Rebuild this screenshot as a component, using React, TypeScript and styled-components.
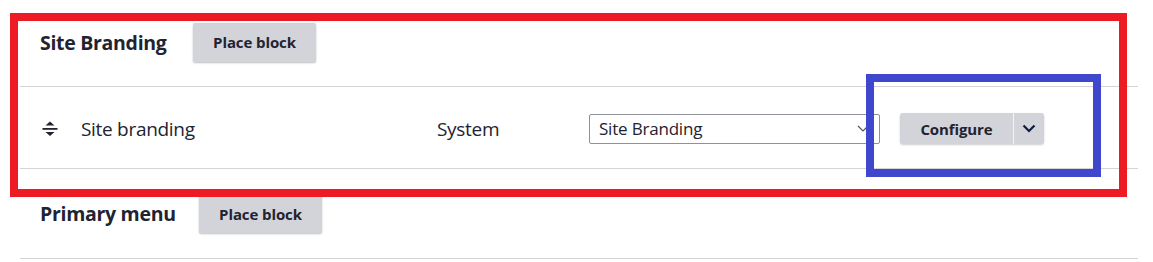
import * as React from 'react';
import styled, { createGlobalStyle } from 'styled-components';

const GlobalStyle = createGlobalStyle`
  html, body {
    margin: 0;
    padding: 0;
    background: #ffffff;
  }
  body {
    font-family: "Open Sans", "Noto Sans", "Liberation Sans", sans-serif;
    color: #222330;
  }
`;

const Screen = styled.div`
  position: relative;
  width: 1153px;
  height: 262px;
  overflow: hidden;
`;

const Regions = styled.div`
  margin: -2px 15px 0 20px;
`;

const RegionHeader = styled.div<{ $height: number }>`
  display: flex;
  align-items: center;
  height: ${(p) => p.$height}px;
  padding-left: 20px;
  border-bottom: 1px solid #d4d4d8;
  box-sizing: border-box;
`;

const RegionTitle = styled.h2<{ $width: number }>`
  margin: 0;
  width: ${(p) => p.$width}px;
  font-size: 19.5px;
  font-weight: 700;
  letter-spacing: -0.3px;
  color: #222330;
  white-space: nowrap;
`;

const PlaceButton = styled.button`
  width: 123px;
  height: 39px;
  border: 0;
  border-radius: 2px;
  background: #d3d4d9;
  box-shadow: 0 1px 2px rgba(0, 0, 0, 0.25);
  font-family: inherit;
  font-size: 15px;
  font-weight: 700;
  letter-spacing: -0.1px;
  color: #222330;
  padding: 0;
  cursor: pointer;
`;

const BlockRow = styled.div`
  display: grid;
  grid-template-columns: 61px 356px 152px 291px auto;
  align-items: center;
  height: 82px;
  padding-top: 2px;
  border-bottom: 1px solid #d4d4d8;
  box-sizing: border-box;
`;

const Handle = styled.span`
  display: flex;
  padding-left: 21px;
`;

const Cell = styled.span`
  font-size: 19px;
  color: #222330;
  letter-spacing: -0.3px;
`;

const SelectWrap = styled.div`
  position: relative;
  width: 291px;
  height: 30px;
  box-sizing: border-box;
  border: 1px solid #8e929c;
  border-radius: 2px;
  display: flex;
  align-items: center;
  padding-left: 9px;
  font-size: 17px;
  letter-spacing: -0.2px;
  color: #222330;
`;

const SelectArrow = styled.svg`
  position: absolute;
  right: 10px;
  top: 10px;
`;

const SplitButton = styled.div`
  display: flex;
  margin-left: 20px;
  width: 144px;
  height: 31px;
  border-radius: 3px;
  background: #d3d4d9;
  box-shadow: 0 1px 2px rgba(0, 0, 0, 0.2);
  overflow: hidden;
`;

const SplitMain = styled.button`
  width: 114px;
  border: 0;
  background: transparent;
  font-family: inherit;
  font-size: 15px;
  font-weight: 700;
  letter-spacing: -0.1px;
  color: #222330;
  padding: 0;
  border-right: 1px solid #f3f4f6;
`;

const SplitToggle = styled.button`
  flex: 1;
  border: 0;
  background: transparent;
  display: flex;
  align-items: center;
  justify-content: center;
  padding: 0;
`;

const Frame = styled.div<{ $color: string; $x: number; $y: number; $w: number; $h: number }>`
  position: absolute;
  left: ${(p) => p.$x}px;
  top: ${(p) => p.$y}px;
  width: ${(p) => p.$w}px;
  height: ${(p) => p.$h}px;
  border: 8px solid ${(p) => p.$color};
  box-sizing: border-box;
  pointer-events: none;
`;

function DragIcon() {
  return (
    <svg width="18" height="18" viewBox="0 0 18 18">
      <path d="M4.5 5.5 L9 1.5 L13.5 5.5 Z" fill="#222330" />
      <rect x="1.5" y="8" width="15" height="1.8" fill="#222330" />
      <path d="M4.5 12 L9 16 L13.5 12 Z" fill="#222330" />
    </svg>
  );
}

export default function App() {
  return (
    <>
      <GlobalStyle />
      <Screen>
        <Regions>
          <RegionHeader $height={89}>
            <RegionTitle $width={153}>Site Branding</RegionTitle>
            <PlaceButton>Place block</PlaceButton>
          </RegionHeader>
          <BlockRow>
            <Handle>
              <DragIcon />
            </Handle>
            <Cell>Site branding</Cell>
            <Cell>System</Cell>
            <SelectWrap>
              Site Branding
              <SelectArrow width="12" height="8" viewBox="0 0 12 8">
                <path d="M1 1 L6 6 L11 1" fill="none" stroke="#555" strokeWidth="1.2" />
              </SelectArrow>
            </SelectWrap>
            <SplitButton>
              <SplitMain>Configure</SplitMain>
              <SplitToggle>
                <svg width="14" height="9" viewBox="0 0 14 9">
                  <path d="M1.5 1.5 L7 7 L12.5 1.5" fill="none" stroke="#0b1c3f" strokeWidth="2.2" />
                </svg>
              </SplitToggle>
            </SplitButton>
          </BlockRow>
          <RegionHeader $height={90}>
            <RegionTitle $width={159}>Primary menu</RegionTitle>
            <PlaceButton>Place block</PlaceButton>
          </RegionHeader>
        </Regions>
        <Frame $color="#ed1c24" $x={10} $y={13} $w={1117} $h={184} />
        <Frame $color="#3f48cc" $x={866} $y={74} $w={235} $h={103} />
      </Screen>
    </>
  );
}
